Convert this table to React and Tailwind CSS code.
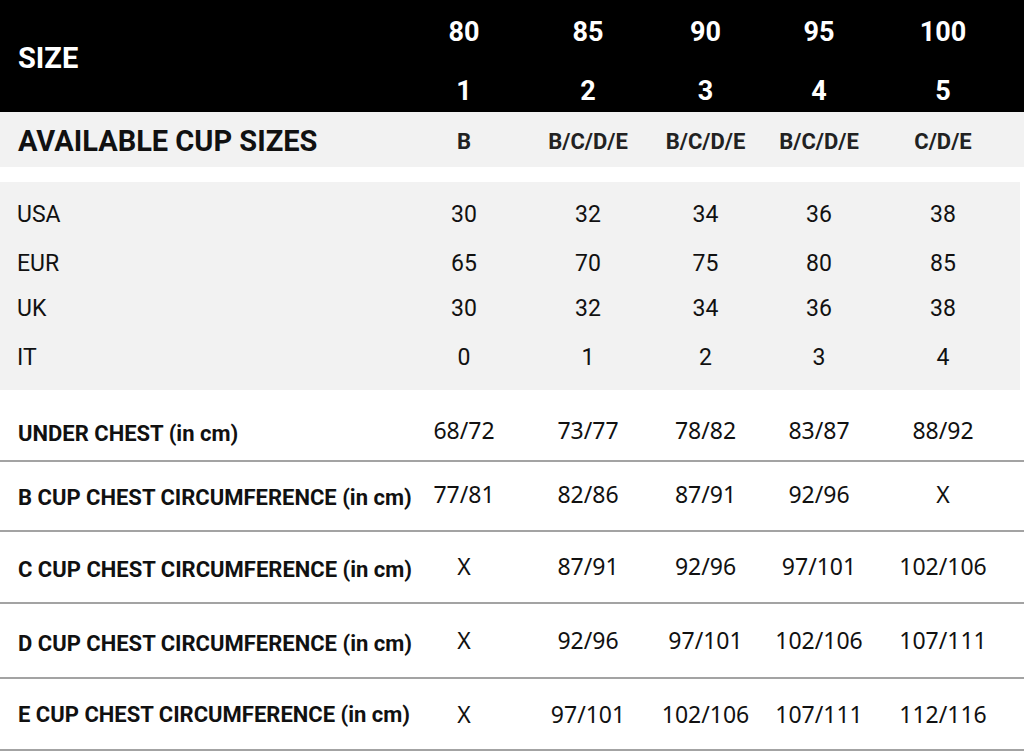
import React from 'react';

const cols = "grid grid-cols-[402px_124px_124px_111px_116px_132px_1fr]";

const regions = [
  { label: "USA", values: ["30", "32", "34", "36", "38"], h: "h-[48px]" },
  { label: "EUR", values: ["65", "70", "75", "80", "85"], h: "h-[50px]" },
  { label: "UK", values: ["30", "32", "34", "36", "38"], h: "h-[40px]" },
  { label: "IT", values: ["0", "1", "2", "3", "4"], h: "h-[58px]" },
];

const measures = [
  { label: "UNDER CHEST (in cm)", values: ["68/72", "73/77", "78/82", "83/87", "88/92"], h: "h-[72px]", pad: "pt-[10px]", lp: "pt-[6px]" },
  { label: "B CUP CHEST CIRCUMFERENCE (in cm)", values: ["77/81", "82/86", "87/91", "92/96", "X"], h: "h-[70px]", pad: "pb-[3px]", lp: "pt-[6px]" },
  { label: "C CUP CHEST CIRCUMFERENCE (in cm)", values: ["X", "87/91", "92/96", "97/101", "102/106"], h: "h-[72px]", pad: "pb-[1px]", lp: "pt-[6px]" },
  { label: "D CUP CHEST CIRCUMFERENCE (in cm)", values: ["X", "92/96", "97/101", "102/106", "107/111"], h: "h-[75px]", pad: "pt-[0px]", lp: "pt-[6px]" },
  { label: "E CUP CHEST CIRCUMFERENCE (in cm)", values: ["X", "97/101", "102/106", "107/111", "112/116"], h: "h-[72px]", pad: "pt-[1px]", lp: "pt-[0px]" },
];

export default function App() {
  return (
    <div className="w-[1024px] h-[752px] bg-white overflow-hidden font-['Roboto',sans-serif] text-[#111]">
      {/* header */}
      <div className={`${cols} bg-black text-white h-[112px]`}>
        <div className="flex items-center pl-[18px] pt-[6px] text-[29px] font-bold">SIZE</div>
        {[["80", "1"], ["85", "2"], ["90", "3"], ["95", "4"], ["100", "5"]].map(([a, b]) => (
          <div key={a} className="flex flex-col items-center text-[27px] font-bold leading-[30px] pt-[17px]">
            <span>{a}</span>
            <span className="mt-[29px]">{b}</span>
          </div>
        ))}
        <div />
      </div>

      {/* cup sizes */}
      <div className={`${cols} bg-[#f2f2f2] h-[55px] items-center`}>
        <div className="pl-[18px] text-[29px] font-bold pt-[4px]">AVAILABLE CUP SIZES</div>
        {["B", "B/C/D/E", "B/C/D/E", "B/C/D/E", "C/D/E"].map((c, i) => (
          <div key={i} className="text-center text-[22px] font-bold text-[#222] pt-[4px]">{c}</div>
        ))}
        <div />
      </div>

      <div className="h-[15px]" />

      {/* regions */}
      <div className="bg-[#f2f2f2] pt-[9px] pb-[3px] mr-[4px]">
        {regions.map((r) => (
          <div key={r.label} className={`${cols} ${r.h} items-center text-[23px]`}>
            <div className="pl-[17px]">{r.label}</div>
            {r.values.map((v, i) => (
              <div key={i} className="text-center">{v}</div>
            ))}
            <div />
          </div>
        ))}
      </div>

      {/* measurements */}
      {measures.map((m) => (
        <div key={m.label} className={`${cols} ${m.h} ${m.pad} items-center border-b-2 border-[#a3a3a3]`}>
          <div className={`pl-[18px] text-[22px] font-bold whitespace-nowrap ${m.lp}`}>{m.label}</div>
          {m.values.map((v, i) => (
            <div key={i} className="text-center text-[23px] font-['Noto_Sans',sans-serif]">{v}</div>
          ))}
          <div />
        </div>
      ))}
    </div>
  );
}
